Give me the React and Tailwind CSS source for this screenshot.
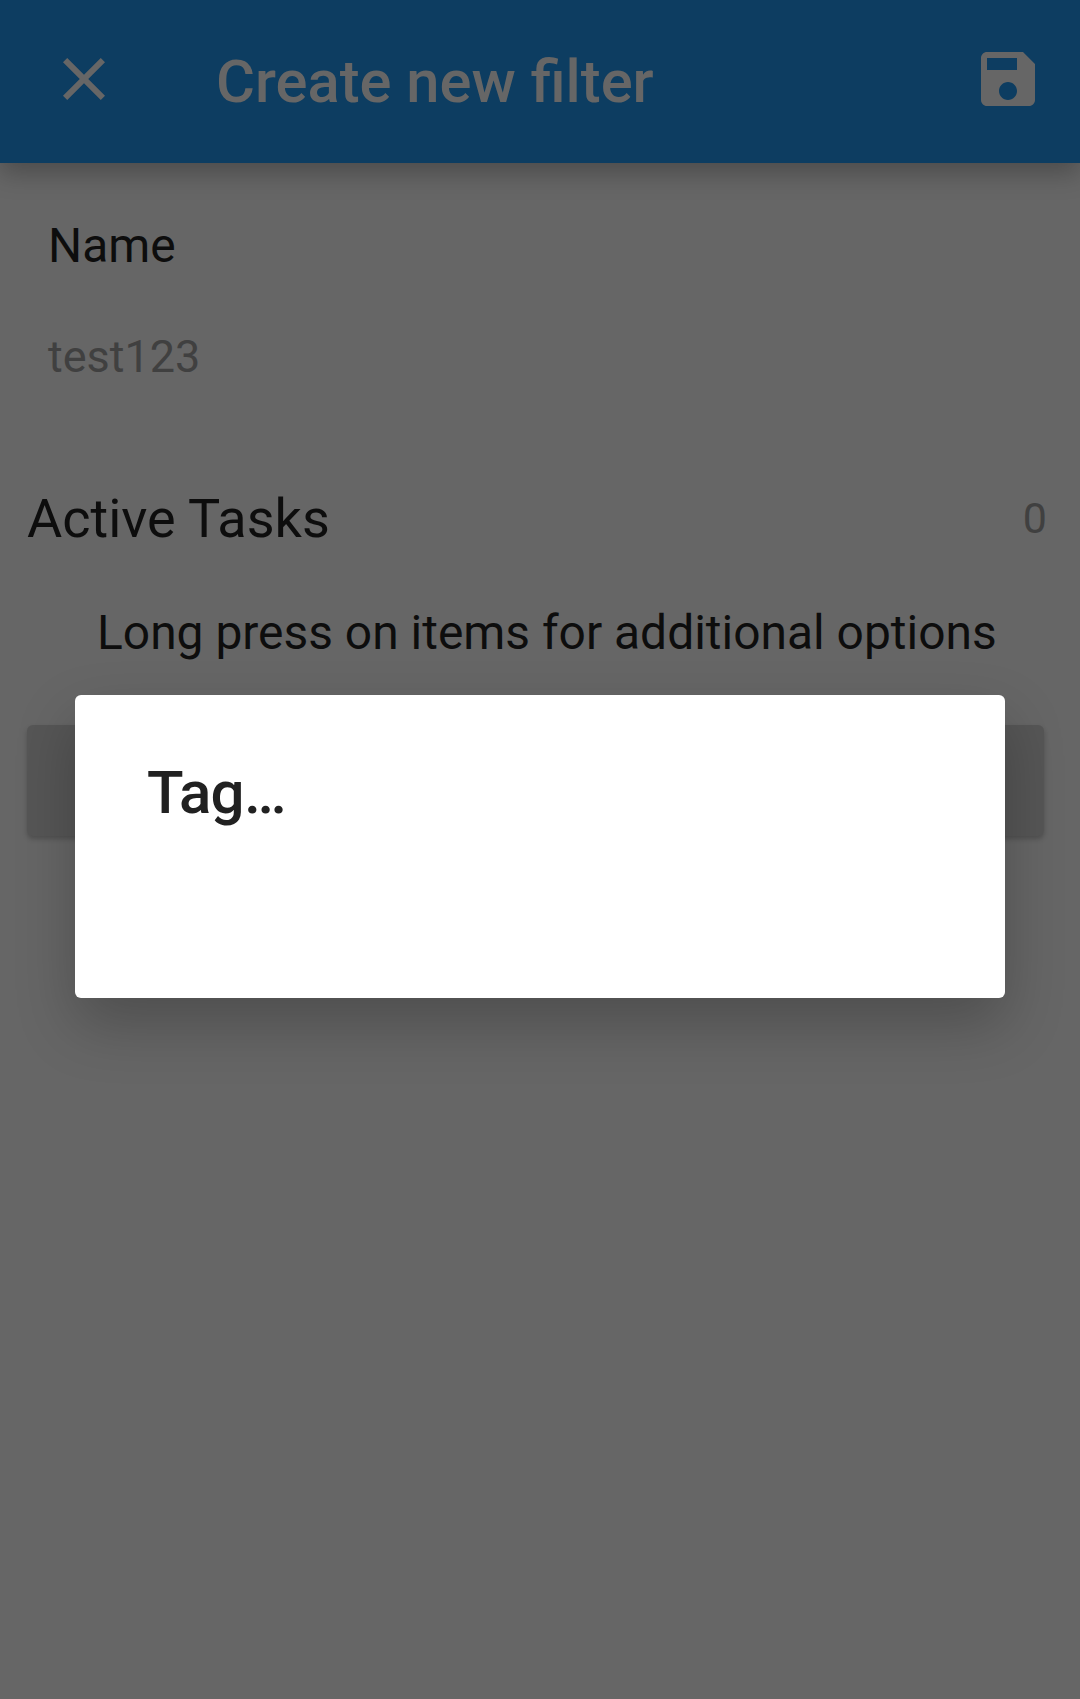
export default function App() {
  return (
    <div className="relative h-[1699px] w-[1080px] overflow-hidden bg-[#666666] font-['Roboto',sans-serif] text-[#0d0d0d]">
      <header className="flex h-[163px] items-start bg-[#0d3d61] text-[#666666] shadow-[0_10px_24px_rgba(0,0,0,0.26)]">
        <svg className="mt-[43px] ml-[48px] size-[72px]" viewBox="0 0 24 24" fill="currentColor"><path d="M19 6.41 17.59 5 12 10.59 6.41 5 5 6.41 10.59 12 5 17.59 6.41 19 12 13.41 17.59 19 19 17.59 13.41 12z" /></svg>
        <h1 className="mt-[47px] ml-[96px] flex-1 text-[59.7px] font-medium leading-[70px]">Create new filter</h1>
        <svg className="mt-[43px] mr-[36px] size-[72px]" viewBox="0 0 24 24" fill="currentColor"><path d="M17 3H5c-1.11 0-2 .9-2 2v14c0 1.1.89 2 2 2h14c1.1 0 2-.9 2-2V7l-4-4zm-5 16c-1.66 0-3-1.34-3-3s1.34-3 3-3 3 1.34 3 3-1.34 3-3 3zm3-10H5V5h10v4z" /></svg>
      </header>
      <main className="flex flex-col">
        <label className="mt-[55px] ml-[48px] text-[47.9px] leading-[56px]">Name</label>
        <div className="mt-[56px] ml-[48px] text-[45px] leading-[54px] text-[#404040]">test123</div>
        <div className="mt-[105px] flex items-start justify-between pr-[33px] pl-[27px]">
          <h2 className="text-[54px] leading-[60px]">Active Tasks</h2>
          <span className="text-[43px] leading-[58px] text-[#404040]">0</span>
        </div>
        <p className="mt-[56px] ml-[97px] text-[47.93px] leading-[56px]">Long press on items for additional options</p>
        <div className="mt-[64px] mr-[36px] ml-[27px] h-[111px] rounded-[6px] bg-[#565656] shadow-[0_3px_5px_rgba(0,0,0,0.22)]" />
      </main>
      <section role="dialog" className="absolute top-[695px] left-[75px] h-[303px] w-[930px] rounded-[6px] bg-white px-[72px] pt-[63px] shadow-[0_26px_60px_rgba(0,0,0,0.24)]">
        <h2 className="text-[60px] font-medium leading-[70px] tracking-[-0.7px] text-[#212121]">Tag…</h2>
      </section>
    </div>
  );
}
